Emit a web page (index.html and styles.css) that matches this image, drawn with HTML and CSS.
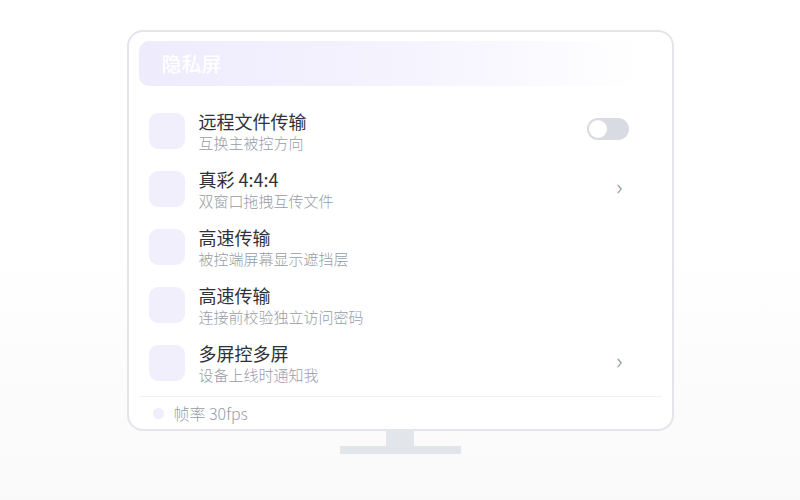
FILE: index.html
```html
<!DOCTYPE HTML>
<html>
<head>
<title>隐私屏</title>
<link rel="stylesheet" href="styles.css">
</head>
<body>
<div class="stage">
    <div class="monitor">
        <div class="screen-header">隐私屏</div>

        <div class="option">
            <div class="option-icon"></div>
            <div class="option-text">
                <div class="option-title">远程文件传输</div>
                <div class="option-desc">互换主被控方向</div>
            </div>
            <div class="toggle"><span class="knob"></span></div>
        </div>
        <div class="option">
            <div class="option-icon"></div>
            <div class="option-text">
                <div class="option-title">真彩 4:4:4</div>
                <div class="option-desc">双窗口拖拽互传文件</div>
            </div>
            <div class="chevron">›</div>
        </div>
        <div class="option">
            <div class="option-icon"></div>
            <div class="option-text">
                <div class="option-title">高速传输</div>
                <div class="option-desc">被控端屏幕显示遮挡层</div>
            </div>
        </div>
        <div class="option">
            <div class="option-icon"></div>
            <div class="option-text">
                <div class="option-title">高速传输</div>
                <div class="option-desc">连接前校验独立访问密码</div>
            </div>
        </div>
        <div class="option">
            <div class="option-icon"></div>
            <div class="option-text">
                <div class="option-title">多屏控多屏</div>
                <div class="option-desc">设备上线时通知我</div>
            </div>
            <div class="chevron">›</div>
        </div>

        <div class="screen-footer">
            <span class="status-dot"></span>
            <span>帧率 30fps</span>
        </div>
    </div>
    <div class="stand-neck"></div>
    <div class="stand-base"></div>
</div>
</body>
</html>
```

FILE: styles.css
```css
body {
    margin: 0;
    height: 500px;
    font-family: "Noto Sans CJK SC", "Noto Sans", sans-serif;
    background: linear-gradient(#ffffff 0, #ffffff 250px, #f9f9fa 100%);
}

.stage {
    display: flex;
    flex-direction: column;
    align-items: center;
    padding-top: 30px;
}

.monitor {
    box-sizing: border-box;
    width: 547px;
    height: 401px;
    padding: 9px 10px 0;
    border: 2px solid #e3e5ea;
    border-radius: 16px;
    background: #fff;
    display: flex;
    flex-direction: column;
}

.screen-header {
    height: 45px;
    padding-left: 23px;
    display: flex;
    align-items: center;
    border-radius: 10px;
    background: linear-gradient(90deg, #eeebfd 0%, #f6f4fe 55%, rgba(255, 255, 255, 0) 96%);
    color: #fff;
    font-size: 20px;
    font-weight: 500;
    margin-bottom: 16px;
}

.option {
    height: 58px;
    display: flex;
    align-items: center;
    padding: 0 33px 0 10px;
}

.option-icon {
    width: 36px;
    height: 36px;
    border-radius: 9px;
    background: #f1effc;
    flex: none;
    margin-right: 14px;
}

.option-text {
    flex: 1;
    display: flex;
    flex-direction: column;
}

.option-title {
    font-size: 18px;
    line-height: 22px;
    color: #303238;
}

.option-desc {
    font-size: 15px;
    line-height: 20px;
    font-weight: 300;
    color: #979ca7;
    margin-top: 1px;
}

.toggle {
    width: 42px;
    height: 22px;
    border-radius: 11px;
    background: #d9dbe2;
    display: flex;
    align-items: center;
    padding-left: 2px;
    box-sizing: border-box;
    margin-top: -4px;
}

.knob {
    width: 18px;
    height: 18px;
    border-radius: 50%;
    background: #fff;
}

.chevron {
    width: 12px;
    font-size: 22px;
    line-height: 20px;
    font-weight: 300;
    color: #8b909a;
    font-family: "Noto Sans", sans-serif;
    margin-top: -7px;
}

.screen-footer {
    margin-top: 4px;
    border-top: 1px solid #eef0f3;
    flex: 1;
    display: flex;
    align-items: center;
    padding-left: 14px;
    font-size: 16px;
    font-weight: 300;
    color: #979ca7;
}

.status-dot {
    width: 11px;
    height: 11px;
    border-radius: 50%;
    background: #f0eefc;
    margin-right: 10px;
}

.stand-neck {
    width: 28px;
    height: 15px;
    background: #e2e5ea;
}

.stand-base {
    width: 121px;
    height: 8px;
    background: #e2e5ea;
}
```
